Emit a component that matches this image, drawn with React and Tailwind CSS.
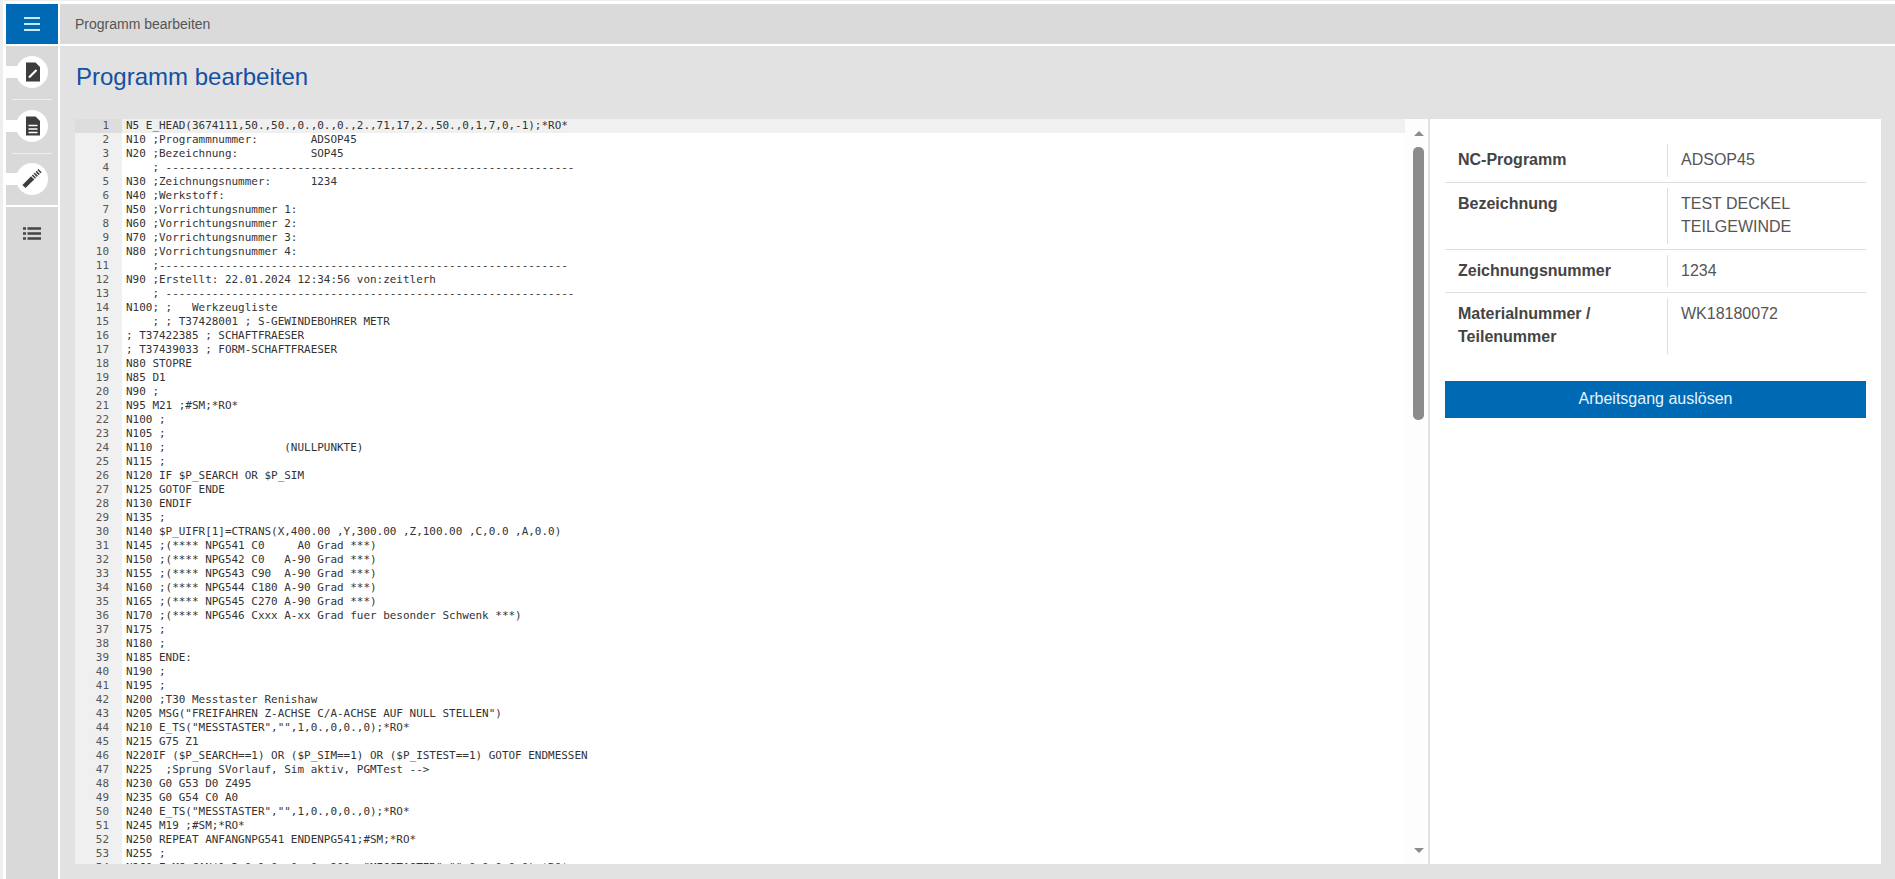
const code = [
  'N5 E_HEAD(3674111,50.,50.,0.,0.,0.,2.,71,17,2.,50.,0,1,7,0,-1);*RO*',
  'N10 ;Programmnummer:        ADSOP45',
  'N20 ;Bezeichnung:           SOP45',
  '    ; --------------------------------------------------------------',
  'N30 ;Zeichnungsnummer:      1234',
  'N40 ;Werkstoff:',
  'N50 ;Vorrichtungsnummer 1:',
  'N60 ;Vorrichtungsnummer 2:',
  'N70 ;Vorrichtungsnummer 3:',
  'N80 ;Vorrichtungsnummer 4:',
  '    ;--------------------------------------------------------------',
  'N90 ;Erstellt: 22.01.2024 12:34:56 von:zeitlerh',
  '    ; --------------------------------------------------------------',
  'N100; ;   Werkzeugliste',
  '    ; ; T37428001 ; S-GEWINDEBOHRER METR',
  '; T37422385 ; SCHAFTFRAESER',
  '; T37439033 ; FORM-SCHAFTFRAESER',
  'N80 STOPRE',
  'N85 D1',
  'N90 ;',
  'N95 M21 ;#SM;*RO*',
  'N100 ;',
  'N105 ;',
  'N110 ;                  (NULLPUNKTE)',
  'N115 ;',
  'N120 IF $P_SEARCH OR $P_SIM',
  'N125 GOTOF ENDE',
  'N130 ENDIF',
  'N135 ;',
  'N140 $P_UIFR[1]=CTRANS(X,400.00 ,Y,300.00 ,Z,100.00 ,C,0.0 ,A,0.0)',
  'N145 ;(**** NPG541 C0     A0 Grad ***)',
  'N150 ;(**** NPG542 C0   A-90 Grad ***)',
  'N155 ;(**** NPG543 C90  A-90 Grad ***)',
  'N160 ;(**** NPG544 C180 A-90 Grad ***)',
  'N165 ;(**** NPG545 C270 A-90 Grad ***)',
  'N170 ;(**** NPG546 Cxxx A-xx Grad fuer besonder Schwenk ***)',
  'N175 ;',
  'N180 ;',
  'N185 ENDE:',
  'N190 ;',
  'N195 ;',
  'N200 ;T30 Messtaster Renishaw',
  'N205 MSG("FREIFAHREN Z-ACHSE C/A-ACHSE AUF NULL STELLEN")',
  'N210 E_TS("MESSTASTER","",1,0.,0,0.,0);*RO*',
  'N215 G75 Z1',
  'N220IF ($P_SEARCH==1) OR ($P_SIM==1) OR ($P_ISTEST==1) GOTOF ENDMESSEN',
  'N225  ;Sprung SVorlauf, Sim aktiv, PGMTest -->',
  'N230 G0 G53 D0 Z495',
  'N235 G0 G54 C0 A0',
  'N240 E_TS("MESSTASTER","",1,0.,0,0.,0);*RO*',
  'N245 M19 ;#SM;*RO*',
  'N250 REPEAT ANFANGNPG541 ENDENPG541;#SM;*RO*',
  'N255 ;',
  'N260 E_MS_CAN(1,3,0,1,0.,0.,0.,200.,"MESSTASTER","",0,0,0,0,0);*RO*',
]

const details = [
  { label: ['NC-Programm'], value: ['ADSOP45'], h: 'h-[44px]' },
  { label: ['Bezeichnung'], value: ['TEST DECKEL', 'TEILGEWINDE'], h: 'h-[67px]' },
  { label: ['Zeichnungsnummer'], value: ['1234'], h: 'h-[43px]' },
  { label: ['Materialnummer /', 'Teilenummer'], value: ['WK18180072'], h: 'h-[66px]' },
]

function DocIcon({ children }) {
  return (
    <svg width="32" height="32" viewBox="0 0 32 32">
      <path d="M10 6.5h9.5l4.5 4.5v14.5H10z" fill="#3d3d3d" />
      {children}
    </svg>
  )
}

function SideButton({ children }) {
  return (
    <div className="flex items-center">
      <div className="w-[12px] h-[12px] bg-white -mr-[2px]" />
      <div className="w-8 h-8 rounded-full bg-white">{children}</div>
    </div>
  )
}

export default function App() {
  return (
    <div className="h-[879px] w-full overflow-hidden bg-white flex pt-[3px] border-t border-[#eeeeee] pl-[3px] border-l-[3px] font-['Liberation_Sans',sans-serif]">
      {/* sidebar */}
      <div className="w-[52px] flex flex-col gap-[2px] shrink-0">
        <div className="h-[40px] bg-[#0069b4] flex items-center justify-center">
          <svg width="18" height="16" viewBox="0 0 18 16">
            <path d="M1 2h16M1 8h16M1 14h16" stroke="#c9e8f8" strokeWidth="2" />
          </svg>
        </div>
        <div className="h-[159px] bg-[#d9d9d9] flex flex-col pt-[10px]">
          <SideButton>
            <DocIcon>
              <path d="M13 21.5l7.5-7.5" stroke="#fff" strokeWidth="2.2" />
            </DocIcon>
          </SideButton>
          <div className="h-px bg-[#eeeeee] mx-[6px] mt-[11px] mb-[10px]" />
          <SideButton>
            <DocIcon>
              <path d="M12.5 15.5h9M12.5 19h9M12.5 22.5h9" stroke="#fff" strokeWidth="1.6" />
            </DocIcon>
          </SideButton>
          <div className="h-px bg-[#eeeeee] mx-[6px] mt-[11px] mb-[9px]" />
          <SideButton>
            <svg width="32" height="32" viewBox="0 0 32 32">
              <path d="M8 23.5l8-8" stroke="#3d3d3d" strokeWidth="4.5" />
              <path d="M15.5 16l9-8.8" stroke="#3d3d3d" strokeWidth="4.5" strokeDasharray="1.6 1" />
            </svg>
          </SideButton>
        </div>
        <div className="flex-1 bg-[#d9d9d9] flex justify-center pt-[20px]">
          <svg width="18" height="13" viewBox="0 0 18 13">
            <path d="M0 1.5h3M4.5 1.5H18M0 6.5h3M4.5 6.5H18M0 11.5h3M4.5 11.5H18" stroke="#444" strokeWidth="2.4" />
          </svg>
        </div>
      </div>

      {/* main */}
      <div className="flex-1 min-w-0 flex flex-col gap-[2px] ml-[2px]">
        <div className="h-[40px] bg-[#dadada] flex items-center pl-[15px] text-[14px] text-[#555555]">
          Programm bearbeiten
        </div>
        <div className="flex-1 min-h-0 bg-[#e2e2e2] flex flex-col pl-[15px] pr-[14px] pb-[15px]">
          <h1 className="h-[73px] pt-[16px] pl-px text-[24px] leading-[30px] text-[#1450a3]">Programm bearbeiten</h1>
          <div className="flex-1 min-h-0 flex gap-[2px]">
            {/* editor */}
            <div className="w-[1353px] bg-white flex overflow-hidden">
              <div className="flex-1 min-w-0 overflow-hidden font-['DejaVu_Sans_Mono',monospace] text-[10.96px] leading-[14px] text-[#333333]">
                {code.map((line, i) => (
                  <div key={i} className={`flex h-[14px] ${i === 0 ? 'bg-[#f0f0f0]' : ''}`}>
                    <div className={`w-[47px] shrink-0 pr-[13px] text-right text-[#555555] ${i === 0 ? 'bg-[#dddddd]' : 'bg-[#f0f0f0]'}`}>
                      {i + 1}
                    </div>
                    <div className="pl-[4px] whitespace-pre">{line}</div>
                  </div>
                ))}
              </div>
              {/* scrollbar */}
              <div className="w-[23px] shrink-0 bg-[#fdfdfd] flex flex-col items-center pl-[4px] pt-[12px] pb-[11px]">
                <div className="w-0 h-0 border-x-[5px] border-x-transparent border-b-[5px] border-b-[#8c8c8c]" />
                <div className="w-[11px] h-[273px] mt-[11px] rounded-[5px] bg-[#8c8c8c]" />
                <div className="flex-1" />
                <div className="w-0 h-0 border-x-[5px] border-x-transparent border-t-[5px] border-t-[#8c8c8c]" />
              </div>
            </div>
            {/* details */}
            <div className="flex-1 bg-white pt-[20px] px-[15px] text-[16px] leading-[23px] text-[#444444]">
              {details.map((row, i) => (
                <div key={i} className={`flex py-[5px] ${row.h} ${i < details.length - 1 ? 'border-b border-[#dedede]' : ''}`}>
                  <div className="w-[223px] pl-[13px] pt-[4px] font-bold border-r border-[#dedede]">
                    {row.label.map(t => <div key={t}>{t}</div>)}
                  </div>
                  <div className="pl-[13px] pt-[4px] text-[#555555]">
                    {row.value.map(t => <div key={t}>{t}</div>)}
                  </div>
                </div>
              ))}
              <button className="w-full h-[37px] mt-[22px] pb-[2px] bg-[#0069b4] text-[#e6f4fc] text-center">
                Arbeitsgang auslösen
              </button>
            </div>
          </div>
        </div>
      </div>
    </div>
  )
}
